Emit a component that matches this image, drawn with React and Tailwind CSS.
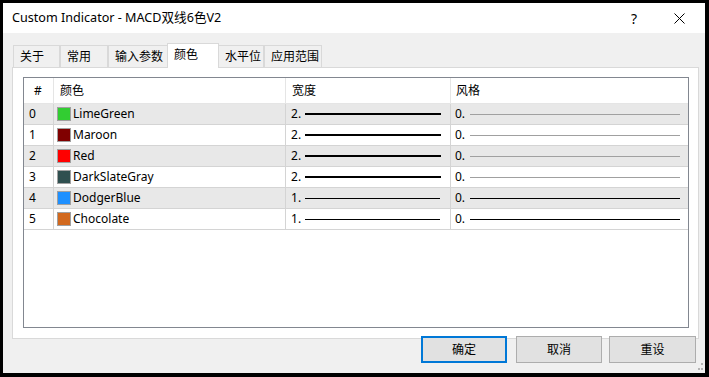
import React from "react";

const rows = [
  { i: 0, name: "LimeGreen", color: "#32cd32", w: 2, styleBlack: false },
  { i: 1, name: "Maroon", color: "#800000", w: 2, styleBlack: false },
  { i: 2, name: "Red", color: "#ff0000", w: 2, styleBlack: false },
  { i: 3, name: "DarkSlateGray", color: "#2f4f4f", w: 2, styleBlack: false },
  { i: 4, name: "DodgerBlue", color: "#1e90ff", w: 1, styleBlack: true },
  { i: 5, name: "Chocolate", color: "#d2691e", w: 1, styleBlack: true },
];

const tabs = ["关于", "常用", "输入参数", "颜色", "水平位", "应用范围"];
const tabW = ["w-[47px]", "w-[48px]", "w-[59px]", "w-[52px]", "w-[45px]", "w-[58px]"];

export default function App() {
  return (
    <div
      className="w-[709px] h-[377px] bg-black overflow-hidden pt-[3px] pl-[3px]"
      style={{ fontFamily: '"Noto Sans", "Noto Sans CJK SC", sans-serif' }}
    >
      <div className="w-[702px] h-[370px] bg-[#f0f0f0] flex flex-col">
        {/* Title bar */}
        <div className="h-[30px] bg-white flex items-center pl-[9px] text-[12.6px] text-black shrink-0">
          <span className="flex-1">Custom Indicator - MACD双线6色V2</span>
          <span className="w-[46px] text-center text-[14px]">?</span>
          <span className="w-[46px] flex justify-center items-center pr-[2px] mr-[2px]">
            <svg width="11" height="11" viewBox="0 0 11 11">
              <path d="M0.5 0.5 L10.5 10.5 M10.5 0.5 L0.5 10.5" stroke="#000" strokeWidth="1" />
            </svg>
          </span>
        </div>

        {/* Tabs */}
        <div className="flex pl-[10px] pt-[10px] h-[34px] items-end text-[12px] shrink-0">
          {tabs.map((t, idx) => {
            const sel = idx === 3;
            return (
              <div
                key={t}
                className={
                  sel
                    ? `${tabW[idx]} h-[25px] bg-white border border-b-0 border-[#d9d9d9] -mb-px relative z-10 pl-[6px] pt-[2px] flex items-start`
                    : `${tabW[idx]} h-[22px] bg-[#f0f0f0] border border-[#d9d9d9] border-b-0 ${idx === 4 ? "border-l-0" : ""} ${idx === 2 ? "border-r-0" : ""} pl-[6px] flex items-center`
                }
              >
                {t}
              </div>
            );
          })}
        </div>

        {/* Panel */}
        <div className="ml-[9px] mr-[6px] h-[272px] bg-white border border-[#d9d9d9] pt-[9px] pl-[10px] pr-[9px] shrink-0">
          <div className="h-[251px] border border-[#828790] bg-white text-[12px] text-black">
            {/* header */}
            <div className="grid grid-cols-[30px_232px_165px_1fr] h-[26px] border-b border-[#e5e5e5]">
              <div className="pl-[10px] flex items-center border-r border-[#e5e5e5]">#</div>
              <div className="pl-[6px] flex items-center border-r border-[#e5e5e5]">颜色</div>
              <div className="pl-[6px] flex items-center border-r border-[#e5e5e5]">宽度</div>
              <div className="pl-[5px] flex items-center">风格</div>
            </div>
            {rows.map((r) => (
              <div
                key={r.i}
                className={`grid grid-cols-[30px_232px_165px_1fr] h-[21px] border-b border-[#d4d4d4] ${
                  r.i % 2 === 0 ? "bg-[#e8e8e8]" : "bg-white"
                }`}
              >
                <div className="pl-[5px] flex items-center border-r border-[#d4d4d4]">{r.i}</div>
                <div className="pl-[3px] flex items-center border-r border-[#d4d4d4]">
                  <span
                    className="w-[14px] h-[14px] border border-[#a0a0a0] mr-[2px] shrink-0"
                    style={{ backgroundColor: r.color }}
                  />
                  <span>{r.name}</span>
                </div>
                <div className="pl-[5px] pr-[9px] flex items-center border-r border-[#d4d4d4]">
                  <span className="w-[14px]">{r.w}.</span>
                  <span className={`flex-1 bg-black ${r.w === 2 ? "h-[2px]" : "h-px mr-px"}`} />
                </div>
                <div className="pl-[4px] pr-[8px] flex items-center">
                  <span className="w-[15px]">0.</span>
                  <span className={`flex-1 h-px ${r.styleBlack ? "bg-black" : "bg-[#a0a0a0]"}`} />
                </div>
              </div>
            ))}
          </div>
        </div>

        {/* Buttons */}
        <div className="flex justify-end pr-[9px] mt-[-3px] text-[12px] relative">
          <button className="w-[86px] h-[27px] bg-[#e1e1e1] border-2 border-[#0078d7] mr-[9px]">确定</button>
          <button className="w-[86px] h-[27px] bg-[#e1e1e1] border border-[#adadad] mr-[7px]">取消</button>
          <button className="w-[87px] h-[27px] bg-[#e1e1e1] border border-[#adadad]">重设</button>
          <div className="absolute right-[2px] bottom-[-8px] grid grid-cols-3 gap-px w-[8px] h-[8px]">
            <span />
            <span />
            <span className="bg-[#b5b5b5] w-[2px] h-[2px]" />
            <span />
            <span className="bg-[#b5b5b5] w-[2px] h-[2px]" />
            <span className="bg-[#b5b5b5] w-[2px] h-[2px]" />
          </div>
        </div>
      </div>
    </div>
  );
}
